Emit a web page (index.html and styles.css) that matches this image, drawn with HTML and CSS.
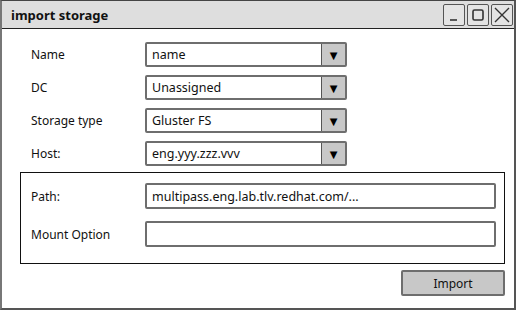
FILE: index.html
```html
<!DOCTYPE html>
<html>
<head>
<meta charset="utf-8">
<link rel="stylesheet" href="styles.css">
</head>
<body>
<div class="window">
  <div class="titlebar">
    <span class="title">import storage</span>
    <div class="winbtns">
      <span class="winbtn"><svg width="18" height="18" viewBox="0 0 18 18"><path d="M5 14 H12" stroke="#333" stroke-width="1.6" fill="none"/></svg></span>
      <span class="winbtn"><svg width="18" height="18" viewBox="0 0 18 18"><rect x="4" y="4" width="10" height="10" rx="1.5" stroke="#333" stroke-width="1.6" fill="none"/></svg></span>
      <span class="winbtn"><svg width="18" height="18" viewBox="0 0 18 18"><path d="M2 2 L16 16 M16 2 L2 16" stroke="#333" stroke-width="1.4" fill="none"/></svg></span>
    </div>
  </div>
  <div class="content">
    <div class="rows">
      <div class="row"><span class="label">Name</span><div class="select"><span class="value">name</span><span class="arrow">&#9660;</span></div></div>
      <div class="row"><span class="label">DC</span><div class="select"><span class="value">Unassigned</span><span class="arrow">&#9660;</span></div></div>
      <div class="row"><span class="label">Storage type</span><div class="select"><span class="value">Gluster FS</span><span class="arrow">&#9660;</span></div></div>
      <div class="row"><span class="label">Host:</span><div class="select"><span class="value">eng.yyy.zzz.vvv</span><span class="arrow">&#9660;</span></div></div>
    </div>
    <div class="group">
      <div class="grow"><span class="glabel">Path:</span><div class="input">multipass.eng.lab.tlv.redhat.com/...</div></div>
      <div class="grow"><span class="glabel">Mount Option</span><div class="input"></div></div>
    </div>
    <div class="actions">
      <div class="button">Import</div>
    </div>
  </div>
</div>
</body>
</html>
```

FILE: styles.css
```css
* { box-sizing: border-box; }
html, body { margin: 0; padding: 0; background: #fff; }
body {
  font-family: "Comic Sans MS", "Noto Sans", "DejaVu Sans", sans-serif;
  font-size: 12px;
  color: #111;
}
.window {
  width: 516px;
  height: 310px;
  border: 1px solid #444;
  border-left: 2px solid #777;
  border-right: 2px solid #555;
  border-bottom: 2px solid #555;
  display: flex;
  flex-direction: column;
}
.titlebar {
  height: 28px;
  background: #dedede;
  border-bottom: 1px solid #222;
  display: flex;
  align-items: center;
  justify-content: space-between;
  padding-left: 9px;
  padding-right: 1px;
}
.title { font-weight: bold; font-size: 13px; }
.winbtns { display: flex; gap: 2px; }
.winbtn {
  width: 22px; height: 22px;
  border: 1.5px solid #555;
  border-radius: 2px;
  display: flex; align-items: center; justify-content: center;
  background: #e4e4e4;
}
.content {
  flex: 1;
  display: flex;
  flex-direction: column;
}
.rows {
  display: flex;
  flex-direction: column;
  gap: 8px;
  padding: 13px 0 0 29px;
}
.row { display: flex; align-items: center; height: 25px; }
.label { width: 114px; }
.select {
  width: 202px;
  height: 25px;
  border: 2px solid #6e6e6e;
  border-radius: 2px;
  display: flex;
  align-items: stretch;
  font-size: 12.5px;
}
.value { flex: 1; padding-left: 5px; display: flex; align-items: center; }
.arrow {
  width: 24px;
  background: #c8c8c8;
  border-left: 1.5px solid #555;
  display: flex; align-items: center; justify-content: center;
  font-size: 10px;
  color: #000;
}
.group {
  margin: 6px 9px 0 18px;
  border: 1px solid #111;
  height: 92px;
  padding: 10px 8px 0 10px;
  display: flex;
  flex-direction: column;
  gap: 12px;
}
.grow { display: flex; align-items: center; }
.glabel { width: 114px; }
.input {
  flex: 1;
  height: 26px;
  border: 2px solid #6e6e6e;
  border-radius: 2px;
  padding-left: 5px;
  display: flex;
  align-items: center;
  font-size: 12.5px;
}
.actions {
  display: flex;
  justify-content: flex-end;
  padding: 6px 9px 0 0;
}
.button {
  width: 104px;
  height: 26px;
  background: #c8c8c8;
  border: 2px solid #6e6e6e;
  border-radius: 2px;
  display: flex; align-items: center; justify-content: center;
}
```
